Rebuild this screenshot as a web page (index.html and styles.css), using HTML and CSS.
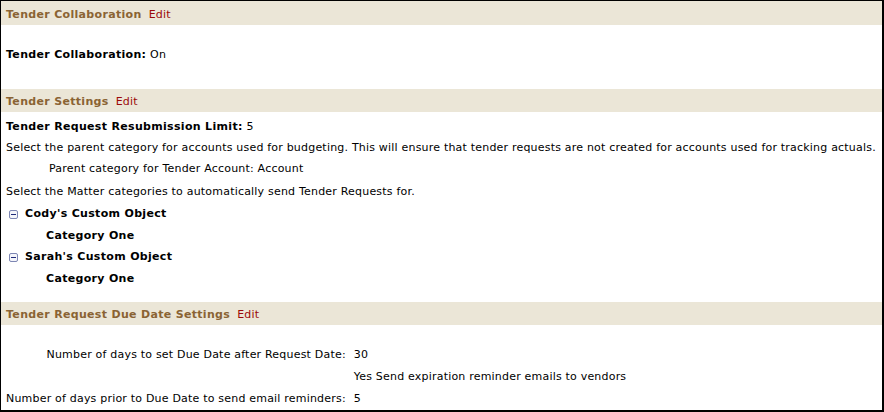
FILE: index.html
```html
<!DOCTYPE html>
<html>
<head>
<meta charset="utf-8">
<title>Tender Settings</title>
<link rel="stylesheet" href="styles.css">
</head>
<body>
<div class="panel">
  <div class="section-head head-first"><span class="head-title">Tender Collaboration</span><a class="edit" href="#">Edit</a></div>
  <div class="section-body collab">
    <div class="row"><b>Tender Collaboration:</b> On</div>
  </div>

  <div class="section-head"><span class="head-title">Tender Settings</span><a class="edit" href="#">Edit</a></div>
  <div class="section-body settings">
    <div class="row"><b>Tender Request Resubmission Limit:</b> 5</div>
    <div class="row">Select the parent category for accounts used for budgeting. This will ensure that tender requests are not created for accounts used for tracking actuals.</div>
    <div class="row parent">Parent category for Tender Account: Account</div>
    <div class="row matter">Select the Matter categories to automatically send Tender Requests for.</div>
    <div class="node"><span class="toggle"><svg width="9" height="9" viewBox="0 0 9 9"><rect x="0.5" y="0.5" width="8" height="8" rx="1.5" fill="#f4f5fa" stroke="#7d86b3"/><path d="M2 4.5h5" stroke="#1f2a7a" stroke-width="1"/></svg></span><b>Cody's Custom Object</b></div>
    <div class="leaf"><b>Category One</b></div>
    <div class="node"><span class="toggle"><svg width="9" height="9" viewBox="0 0 9 9"><rect x="0.5" y="0.5" width="8" height="8" rx="1.5" fill="#f4f5fa" stroke="#7d86b3"/><path d="M2 4.5h5" stroke="#1f2a7a" stroke-width="1"/></svg></span><b>Sarah's Custom Object</b></div>
    <div class="leaf"><b>Category One</b></div>
  </div>

  <div class="section-head"><span class="head-title">Tender Request Due Date Settings</span><a class="edit" href="#">Edit</a></div>
  <div class="section-body due">
    <div class="due-grid">
      <div class="label">Number of days to set Due Date after Request Date:</div>
      <div class="value">30</div>
      <div class="label"></div>
      <div class="value">Yes Send expiration reminder emails to vendors</div>
      <div class="label">Number of days prior to Due Date to send email reminders:</div>
      <div class="value">5</div>
    </div>
  </div>
</div>
</body>
</html>
```

FILE: styles.css
```css
html, body {
  margin: 0;
  padding: 0;
  background: #fff;
}

body {
  font-family: "DejaVu Sans", Verdana, sans-serif;
  font-size: 11px;
  letter-spacing: 0.2px;
  color: #000;
}

b, .head-title {
  letter-spacing: 0.32px;
}

.panel {
  width: 881px;
  height: 409px;
  border-left: 1px solid #000;
  border-top: 1px solid #000;
  border-right: 2px solid #000;
  border-bottom: 2px solid #000;
  overflow: hidden;
}

.section-head {
  height: 22px;
  padding-top: 1px;
  background: #ebe6d7;
  padding-left: 5px;
  display: flex;
  align-items: center;
}

.head-first {
  padding-top: 2px;
}

.head-title {
  font-weight: bold;
  color: #8a6333;
  margin-right: 7px;
}

.edit {
  color: #9c0a0a;
  text-decoration: none;
}

.section-body {
  padding-left: 5px;
}

.row {
  height: 21px;
  line-height: 21px;
  white-space: nowrap;
}

.collab {
  padding-top: 19px;
  height: 45px;
}

.collab .row {
  height: 22px;
  line-height: 22px;
}

.settings {
  padding-top: 4px;
  height: 186px;
}

.parent {
  padding-left: 43px;
}

.matter {
  margin-top: 2px;
  height: 22px;
  line-height: 22px;
}

.node {
  height: 22px;
  line-height: 22px;
  display: flex;
  align-items: center;
  padding-left: 3px;
}

.node + .node {
  height: 21px;
  line-height: 21px;
}

.toggle {
  display: inline-flex;
  width: 9px;
  height: 9px;
  margin-right: 7px;
}

.leaf {
  height: 21px;
  line-height: 21px;
  padding-left: 40px;
}

.due {
  padding-top: 19px;
}

.due-grid {
  display: grid;
  grid-template-columns: auto 1fr;
  grid-template-rows: 21px 22px 22px;
  column-gap: 8px;
  line-height: 21px;
}

.label {
  text-align: right;
  white-space: nowrap;
}

.due-grid > div {
  display: flex;
  align-items: center;
}

.due-grid > .label {
  justify-content: flex-end;
}
```
